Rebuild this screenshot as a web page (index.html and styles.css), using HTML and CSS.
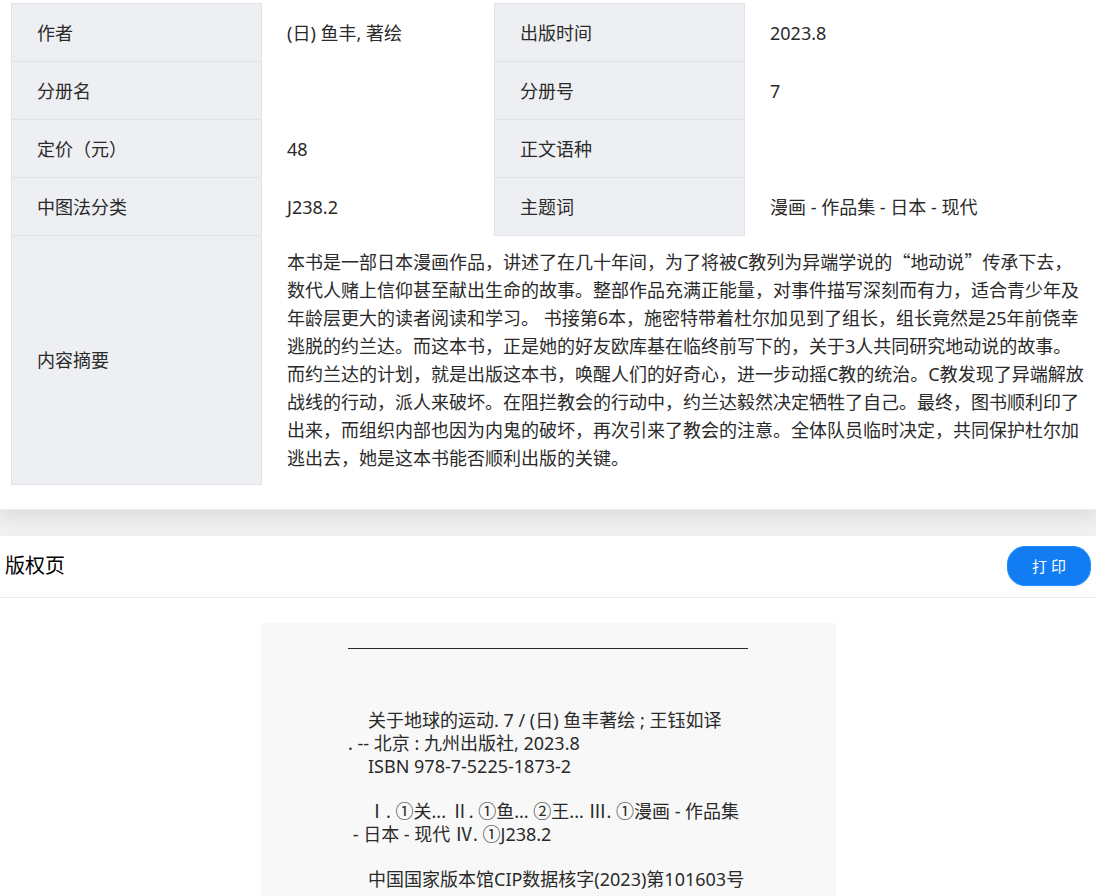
FILE: index.html
```html
<!DOCTYPE html>
<html lang="zh-CN">
<head>
    <meta charset="UTF-8">
    <meta name="viewport" content="width=device-width, initial-scale=1.0">
    <title>关于地球的运动. 7</title>
    <link rel="stylesheet" href="styles.css">
</head>
<body>
    <section class="card detail">
        <table class="info">
            <colgroup>
                <col class="col-label">
                <col class="col-value">
                <col class="col-label">
                <col>
            </colgroup>
            <tbody>
                <tr>
                    <th scope="row">作者</th>
                    <td>(日) 鱼丰, 著绘</td>
                    <th scope="row">出版时间</th>
                    <td>2023.8</td>
                </tr>
                <tr>
                    <th scope="row">分册名</th>
                    <td></td>
                    <th scope="row">分册号</th>
                    <td>7</td>
                </tr>
                <tr>
                    <th scope="row">定价（元）</th>
                    <td>48</td>
                    <th scope="row">正文语种</th>
                    <td></td>
                </tr>
                <tr>
                    <th scope="row">中图法分类</th>
                    <td>J238.2</td>
                    <th scope="row">主题词</th>
                    <td>漫画 - 作品集 - 日本 - 现代</td>
                </tr>
                <tr>
                    <th scope="row">内容摘要</th>
                    <td colspan="3" class="summary">本书是一部日本漫画作品，讲述了在几十年间，为了将被C教列为异端学说的<span class="quote">“</span>地动说<span class="quote">”</span>传承下去，<br>数代人赌上信仰甚至献出生命的故事。整部作品充满正能量，对事件描写深刻而有力，适合青少年及<br>年龄层更大的读者阅读和学习。 书接第6本，施密特带着杜尔加见到了组长，组长竟然是25年前侥幸<br>逃脱的约兰达。而这本书，正是她的好友欧库基在临终前写下的，关于3人共同研究地动说的故事。<br>而约兰达的计划，就是出版这本书，唤醒人们的好奇心，进一步动摇C教的统治。C教发现了异端解放<br>战线的行动，派人来破坏。在阻拦教会的行动中，约兰达毅然决定牺牲了自己。最终，图书顺利印了<br>出来，而组织内部也因为内鬼的破坏，再次引来了教会的注意。全体队员临时决定，共同保护杜尔加<br>逃出去，她是这本书能否顺利出版的关键。</td>
                </tr>
            </tbody>
        </table>
    </section>

    <section class="card">
        <div class="card-header">
            <h2>版权页</h2>
            <button type="button" class="btn-print" onclick="window.print()">打 印</button>
        </div>
        <div class="cip">
            <div class="cip-body">
                <hr>
                <div class="cip-block">
                    <p class="indent">关于地球的运动. 7 / (日) 鱼丰著绘 ; 王钰如译</p>
                    <p>. -- 北京 : 九州出版社, 2023.8</p>
                    <p class="indent">ISBN 978-7-5225-1873-2</p>
                </div>
                <div class="cip-block">
                    <p class="indent">Ⅰ. ①关... Ⅱ. ①鱼... ②王... Ⅲ. ①漫画 - 作品集</p>
                    <p>&nbsp;- 日本 - 现代 Ⅳ. ①J238.2</p>
                </div>
                <div class="cip-block">
                    <p class="indent">中国国家版本馆CIP数据核字(2023)第101603号</p>
                </div>
            </div>
        </div>
    </section>
</body>
</html>
```

FILE: styles.css
```css
* {
    box-sizing: border-box;
}
body {
    margin: 0;
    background-color: #f0f0f0;
    color: #2a2a2a;
    font-family: "Noto Sans", "Noto Sans CJK SC", sans-serif;
    font-size: 18px;
    line-height: 28px;
}
.card {
    background-color: #fff;
    border-bottom: 1px solid #ebebeb;
}
.detail {
    margin-bottom: 26px;
    padding: 3px 0 24px 11px;
    box-shadow: 0 8px 16px rgba(0, 0, 0, 0.08);
}

/* book info table */
.info {
    width: 100%;
    table-layout: fixed;
    border-collapse: collapse;
}
.col-label { width: 250px; }
.col-value { width: 233px; }
.info th, .info td {
    padding: 15px 0 14px 25px;
    text-align: left;
    font-weight: normal;
}
.info th {
    background-color: #eeeff3;
    border: 1px solid #e1e2e6;
}
.info .summary {
    padding-top: 12px;
    padding-bottom: 12px;
    white-space: nowrap;
}
.quote {
    font-family: "Noto Sans CJK SC", sans-serif;
    line-height: 1;
}

/* copyright page */
.card-header {
    display: flex;
    align-items: center;
    justify-content: space-between;
    padding: 10px 5px 11px;
    border-bottom: 1px solid #ebebeb;
}
.card-header h2 {
    margin: 0;
    color: #000;
    font-size: 20px;
    font-weight: normal;
}
.btn-print {
    height: 40px;
    padding: 0 24px;
    border: 1px solid #1890ff;
    border-radius: 18px;
    background-color: #127cf3;
    box-shadow: 0 2px 0 rgba(0, 0, 0, 0.04);
    color: #fff;
    font-family: inherit;
    font-size: 15px;
    cursor: pointer;
}
.cip {
    max-width: 575px;
    margin: 25px auto 0;
    padding: 25px 0 6px;
    background-color: #f8f8f8;
}
.cip-body {
    width: 400px;
    margin: 0 auto;
    line-height: 23px;
    white-space: nowrap;
}
.cip-body hr {
    margin: 0 0 60px;
    border: 0;
    border-top: 1px solid #2a2a2a;
}
.cip-body p {
    margin: 0;
}
.cip-block + .cip-block {
    margin-top: 22px;
}
.indent {
    padding-left: 20px;
}
```
